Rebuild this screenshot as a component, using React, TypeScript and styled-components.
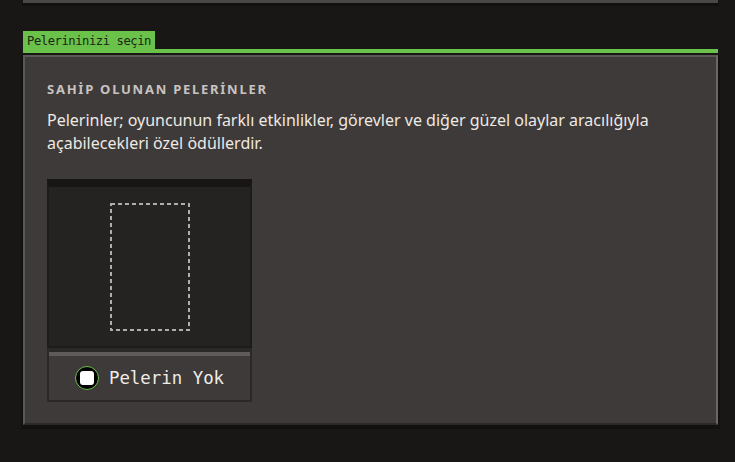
import styled, { createGlobalStyle } from "styled-components";

const GlobalStyle = createGlobalStyle`
    html, body {
        margin: 0;
        padding: 0;
        background: #181716;
    }
    body {
        font-family: "Noto Sans", "Open Sans", sans-serif;
    }
`;

const Page = styled.div`
    width: 735px;
    height: 462px;
    padding: 0 17px 0 23px;
    box-sizing: border-box;
    overflow: hidden;
    display: flex;
    flex-direction: column;
`;

const PrevPanel = styled.div`
    height: 3px;
    background: #4a4847;
    box-shadow: 0 2px 0 1px #121110;
`;

const Section = styled.section`
    margin-top: 28px;
    display: flex;
    flex-direction: column;
`;

const TabRow = styled.div`
    display: flex;
    border-bottom: 4px solid #6bc24a;
`;

const Tab = styled.div`
    height: 18px;
    padding: 0 4px;
    background: #6bc24a;
    color: #1c2616;
    font-family: "DejaVu Sans Mono", "Liberation Mono", monospace;
    font-size: 12.2px;
    letter-spacing: -0.45px;
    line-height: 20px;
`;

const Panel = styled.div`
    margin-top: 2px;
    border: 2px solid #5a5857;
    border-right-color: #6a6867;
    border-bottom-color: #2c2a29;
    background: #3d3a39;
    padding: 21px 22px 21px 22px;
    box-shadow: 0 2px 0 2px #121110;
    display: flex;
    flex-direction: column;
    align-items: flex-start;
`;

const Heading = styled.h2`
    margin: 0;
    font-size: 13px;
    font-weight: 700;
    letter-spacing: 1.75px;
    color: #c9c3c0;
    line-height: 22px;
`;

const Text = styled.p`
    margin: 9px 0 0;
    font-size: 16px;
    line-height: 23px;
    color: #efe9e4;
    width: 640px;
`;

const Card = styled.div`
    margin-top: 24px;
    width: 205px;
    display: flex;
    flex-direction: column;
`;

const Preview = styled.div`
    height: 159px;
    background: #242322;
    border: 2px solid #1d1c1b;
    border-top: 8px solid #171615;
    display: flex;
    align-items: center;
    justify-content: center;
`;

const SelectButton = styled.div`
    height: 44px;
    border: 2px solid #2b2928;
    border-top-width: 4px;
    background: #3d3a39;
    box-shadow: inset 0 4px 0 #5e5b5a;
    padding-top: 4px;
    display: flex;
    align-items: center;
    justify-content: center;
    gap: 10px;
`;

const Radio = styled.span`
    width: 22px;
    height: 22px;
    border: 1px solid #6bc24a;
    border-radius: 50%;
    background: #000;
    display: flex;
    align-items: center;
    justify-content: center;

    &::after {
        content: "";
        width: 14px;
        height: 14px;
        border-radius: 3px;
        background: #fff;
    }
`;

const Label = styled.span`
    font-family: "DejaVu Sans Mono", "Liberation Mono", monospace;
    font-size: 17.4px;
    color: #f0ece8;
    line-height: 20px;
`;

const EmptySlot = () => (
    <svg width="80" height="128" viewBox="0 0 80 128">
        <rect
            x="1"
            y="1"
            width="78"
            height="126"
            fill="none"
            stroke="#b3acaa"
            strokeWidth="2"
            strokeDasharray="4 3"
        />
    </svg>
);

export default function App() {
    return (
        <Page>
            <GlobalStyle />
            <PrevPanel />
            <Section>
                <TabRow>
                    <Tab>Pelerininizi seçin</Tab>
                </TabRow>
                <Panel>
                    <Heading>SAHİP OLUNAN PELERİNLER</Heading>
                    <Text>
                        Pelerinler; oyuncunun farklı etkinlikler, görevler ve diğer güzel olaylar aracılığıyla
                        açabilecekleri özel ödüllerdir.
                    </Text>
                    <Card>
                        <Preview>
                            <EmptySlot />
                        </Preview>
                        <SelectButton>
                            <Radio />
                            <Label>Pelerin Yok</Label>
                        </SelectButton>
                    </Card>
                </Panel>
            </Section>
        </Page>
    );
}
